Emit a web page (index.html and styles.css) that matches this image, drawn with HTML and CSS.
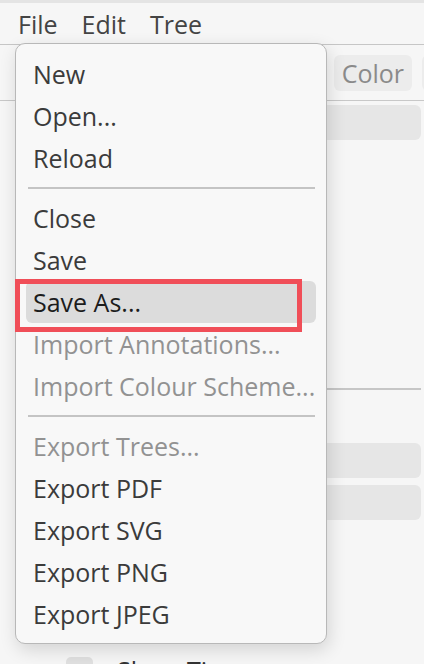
FILE: index.html
```html
<!DOCTYPE html>
<html>
<head>
<meta charset="utf-8">
<link rel="stylesheet" href="styles.css">
</head>
<body>
<div class="app">
  <div class="topstrip"></div>
  <nav class="menubar">
    <span class="mb-item">File</span>
    <span class="mb-item">Edit</span>
    <span class="mb-item">Tree</span>
  </nav>
  <div class="content">
    <div class="toolbar">
      <span class="tb-btn">Layout</span>
      <span class="tb-btn">Color</span>
      <span class="tb-btn tb-edge"></span>
    </div>
    <div class="panel">
      <div class="bar"></div>
      <div class="spacer1"></div>
      <div class="rule"></div>
      <div class="spacer2"></div>
      <div class="bar"></div>
      <div class="bar"></div>
      <div class="spacer3"></div>
      <div class="check-row"><span class="check"></span><span class="check-label">Show Tips</span></div>
    </div>
  </div>

  <div class="menu">
    <div class="item">New</div>
    <div class="item">Open...</div>
    <div class="item">Reload</div>
    <div class="sep"></div>
    <div class="item">Close</div>
    <div class="item">Save</div>
    <div class="item active">Save As...</div>
    <div class="item disabled">Import Annotations...</div>
    <div class="item disabled">Import Colour Scheme...</div>
    <div class="sep"></div>
    <div class="item disabled">Export Trees...</div>
    <div class="item">Export PDF</div>
    <div class="item">Export SVG</div>
    <div class="item">Export PNG</div>
    <div class="item">Export JPEG</div>
  </div>
  <div class="annot"></div>
</div>
</body>
</html>
```
FILE: styles.css
```css
* { box-sizing: border-box; }
html, body {
  margin: 0;
  padding: 0;
  background: #f6f6f6;
  font-family: "Open Sans", "Noto Sans", sans-serif;
  color: #3c3c3c;
  overflow: hidden;
}
.app {
  position: relative;
  width: 424px;
  height: 664px;
  overflow: hidden;
}
.topstrip {
  height: 3px;
  background: #e4e4e4;
}
.menubar {
  height: 42px;
  display: flex;
  align-items: center;
  gap: 24px;
  padding: 0 0 0 18px;
  border-bottom: 1.5px solid #c6c6c6;
  font-size: 25px;
  color: #444;
}
.content {
  display: flex;
  flex-direction: column;
}
.toolbar {
  height: 56px;
  display: flex;
  align-items: center;
  justify-content: flex-end;
  gap: 10px;
  border-bottom: 1.5px solid #c8c8c8;
}
.tb-btn {
  height: 36px;
  display: flex;
  align-items: center;
  padding: 0 8px;
  background: #ececec;
  border-radius: 6px;
  font-size: 25px;
  color: #8a8a8a;
}
.tb-edge {
  width: 14px;
  padding: 0;
  border-radius: 6px 0 0 6px;
  margin-right: -12px;
}
.panel {
  display: flex;
  flex-direction: column;
  padding: 4px 3px 0 60px;
  gap: 7px;
}
.bar {
  height: 35px;
  background: #e6e6e6;
  border-radius: 6px;
}
.spacer1 { height: 241px; }
.rule {
  height: 2px;
  background: #c6c6c6;
  margin-top: -7px;
}
.spacer2 { height: 39px; }
.spacer3 { height: 119px; }
.check-row {
  display: flex;
  align-items: center;
  gap: 24px;
  margin-left: 6px;
  font-size: 25px;
  color: #333;
}
.check {
  width: 27px;
  height: 27px;
  border-radius: 5px;
  background: #e0e0e0;
}

.menu {
  position: absolute;
  left: 15px;
  top: 43px;
  width: 312px;
  height: 601px;
  background: #f8f8f8;
  border: 1.5px solid #b8b8b8;
  border-radius: 10px;
  padding: 9px 0 0 0;
  box-shadow: 2px 6px 18px rgba(0,0,0,0.14);
  display: flex;
  flex-direction: column;
  font-size: 25px;
}
.item {
  height: 42px;
  display: flex;
  align-items: center;
  margin: 0 10px;
  padding-left: 7px;
  border-radius: 6px;
  color: #3b3b3b;
  white-space: nowrap;
}
.item.active {
  background: #dcdcdc;
  color: #1c1c1c;
}
.item.disabled {
  color: #929292;
}
.sep {
  height: 18px;
  display: flex;
  align-items: center;
  margin: 0 11px 0 12px;
}
.sep::before {
  content: "";
  display: block;
  width: 100%;
  height: 2px;
  background: #c4c4c4;
}
.annot {
  position: absolute;
  left: 15px;
  top: 279px;
  width: 287px;
  height: 53px;
  border: 5px solid #f04e58;
}
```
